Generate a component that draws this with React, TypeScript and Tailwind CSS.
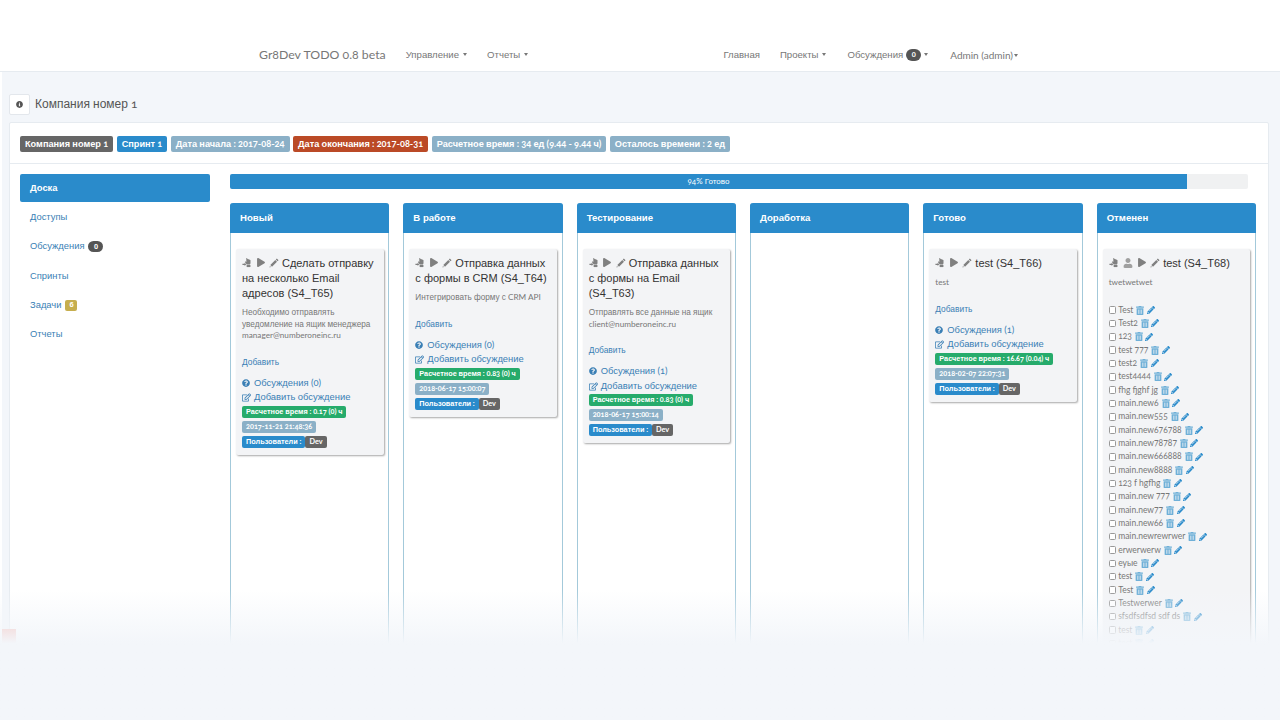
import { FaInfoCircle, FaPlay, FaQuestionCircle, FaRegEdit, FaTrashAlt, FaUser, FaPencilAlt } from 'react-icons/fa'

const labelColors = {
  dark: 'bg-[#666666]',
  blue: 'bg-[#2a8bcb]',
  light: 'bg-[#8bb0c7]',
  red: 'bg-[#bb4a26]',
  green: 'bg-[#26ab6b]',
}

// Cyrillic falls back to a Helvetica-like face in the original, digits and latin stay Lato
function t(text: string) {
  return (
    <span>
      {text.split(/([А-Яа-яЁё]+)/).map((part, i) =>
        i % 2 ? <span key={i} className="font-['Liberation_Sans']">{part}</span> : part
      )}
    </span>
  )
}

function HandIcon() {
  return (
    <svg viewBox="0 0 14 14" className="w-[10px] h-[11px] fill-[#808080] shrink-0">
      <path d="M6 1c.5-.7 1.4-.4 1.5.3l.1 1c.5-.6 1.4-.3 1.5.3.5-.4 1.3-.1 1.4.5.6-.3 1.4 0 1.4.7v3.9c0 .8-.3 1.4-.7 2H6.6L4.2 6.6c-.5-.7.3-1.5 1-1l.9.6L6 1z" />
      <path d="M6.5 10.4h5.3v3H6.5z" />
      <path d="M.6 8.8h3V7.2L6 9.6l-2.4 2.4v-1.6h-3z" />
    </svg>
  )
}

function ThinPencil() {
  return (
    <svg viewBox="0 0 14 14" className="w-[10px] h-[10px] fill-[#808080] shrink-0">
      <path d="M11 .6l2.4 2.4-1.5 1.5-2.4-2.4zM8.8 2.8l2.4 2.4-7 7-2.4-2.4zM1.3 11.3l1.4 1.4-2 .6z" />
    </svg>
  )
}

function NavItem({ text, caret = true }: { text: string; caret?: boolean }) {
  return (
    <span className="flex items-center gap-[4px]">
      {t(text)}
      {caret && <Caret />}
    </span>
  )
}

function Caret() {
  return <span className="inline-block border-x-[2.5px] border-t-[3px] border-x-transparent border-t-[#777777]" />
}

function Label({ color, children }: { color: keyof typeof labelColors; children: string }) {
  return (
    <span className={`inline-flex items-center h-[16px] px-[5px] rounded-[2px] text-white font-bold text-[9.2px] leading-[16px] whitespace-nowrap ${labelColors[color]}`}>
      {t(children)}
    </span>
  )
}

function SmallLabel({ color, children }: { color: keyof typeof labelColors; children: string }) {
  return (
    <span className={`inline-flex items-center h-[12px] px-[4px] rounded-[2px] text-white font-bold text-[7.3px] leading-[12px] whitespace-nowrap ${labelColors[color]}`}>
      {t(children)}
    </span>
  )
}

function CardIcons({ user = false }: { user?: boolean }) {
  return (
    <span className="inline-flex items-center gap-[4.5px] mr-[3px] align-[-1px]">
      <HandIcon />
      {user && <FaUser className="w-[10px] h-[10px] text-[#a0a0a0]" />}
      <FaPlay className="w-[8px] h-[9px] text-[#808080]" />
      <ThinPencil />
    </span>
  )
}

function TaskCard({ title, description, estimate, date, discussions }: {
  title: string
  description: string[]
  estimate: string
  date: string
  discussions: number
}) {
  return (
    <div className="bg-[#f3f4f6] rounded-[2px] shadow-[1px_1px_2px_rgba(0,0,0,0.35)] px-[6px] pt-[7px] pb-[7px]">
      <h3 className="font-['Liberation_Sans'] text-[#333333] text-[11px] leading-[15px]">
        <CardIcons />
        {title}
      </h3>
      <div className="mt-[6px] text-[#777777] text-[8.2px] leading-[11.5px]">
        {description.map(line => <p key={line}>{t(line)}</p>)}
      </div>
      <a className="block mt-[15px] text-[#3a7fb5] text-[8.4px] leading-[11px]">{t('Добавить')}</a>
      <div className="mt-[8px] text-[#3a7fb5] text-[9.4px] leading-[14.7px]">
        <p className="flex items-center gap-[4px]"><FaQuestionCircle className="w-[8px] h-[8px]" />{t(`Обсуждения (${discussions})`)}</p>
        <p className="flex items-center gap-[3px]"><FaRegEdit className="w-[9px] h-[9px]" />{t('Добавить обсуждение')}</p>
      </div>
      <div className="mt-[1px] flex flex-col items-start gap-[3px]">
        <SmallLabel color="green">{`Расчетное время : ${estimate} ч`}</SmallLabel>
        <SmallLabel color="light">{date}</SmallLabel>
        <span className="flex">
          <SmallLabel color="blue">Пользователи :</SmallLabel>
          <SmallLabel color="dark">Dev</SmallLabel>
        </span>
      </div>
    </div>
  )
}

const checklist = [
  'Test', 'Test2', '123', 'test 777', 'test2', 'test4444', 'fhg fjghf jg', 'main.new6', 'main.new555',
  'main.new676788', 'main.new78787', 'main.new666888', 'main.new8888', '123 f hgfhg', 'main.new 777',
  'main.new77', 'main.new66', 'main.newrewrwer', 'erwerwerw', 'eyыe', 'test', 'Test', 'Testwerwer',
  'sfsdfsdfsd sdf ds', 'test', 'test',
]

function ChecklistCard() {
  return (
    <div className="bg-[#f3f4f6] rounded-[2px] shadow-[1px_1px_2px_rgba(0,0,0,0.35)] px-[6px] pt-[7px] h-[500px]">
      <h3 className="font-['Liberation_Sans'] text-[#333333] text-[11px] leading-[15px]">
        <CardIcons user />
        test (S4_T68)
      </h3>
      <p className="mt-[6px] text-[#777777] text-[8.2px] leading-[11.5px]">twetwetwet</p>
      <ul className="mt-[15px] text-[#777777] text-[8.5px]">
        {checklist.map((item, i) => (
          <li key={i} className="flex items-center h-[13.33px] whitespace-nowrap">
            <span className="w-[7.5px] h-[7.5px] mr-[2px] rounded-[1.5px] border border-[#999999] bg-white shrink-0" />
            <span>{item}</span>
            <FaTrashAlt className="w-[8px] h-[9px] ml-[3px] text-[#6fb0d8]" />
            <FaPencilAlt className="w-[8px] h-[8px] ml-[2.5px] text-[#2a8bcb]" />
          </li>
        ))}
      </ul>
    </div>
  )
}

function Column({ title, children }: { title: string; children?: React.ReactNode }) {
  return (
    <div className="h-[470px] border-x border-[#a3c9da] rounded-t-[3px]">
      <div className="-mx-px h-[30px] flex items-center px-[10px] bg-[#2a8bcb] rounded-t-[3px] text-white font-bold text-[9.6px] font-['Liberation_Sans']">
        {title}
      </div>
      <div className="pt-[16px] pl-[5px] pr-[4.5px]">{children}</div>
    </div>
  )
}

function SideItem({ text, active = false, children }: { text: string; active?: boolean; children?: React.ReactNode }) {
  return (
    <div className={`flex items-center gap-[4px] px-[10px] rounded-[2px] text-[9.4px] font-['Liberation_Sans'] ${active ? 'h-[28px] mb-[0.5px] bg-[#2a8bcb] text-white font-bold' : 'h-[29.3px] text-[#3a7fb5]'}`}>
      {text}
      {children}
    </div>
  )
}

export default function App() {
  return (
    <div className="relative h-[720px] overflow-hidden bg-white [font-family:'Lato','Liberation_Sans',sans-serif] [font-variant-numeric:oldstyle-nums]">
      {/* Top nav */}
      <header className="h-[72px] pt-[38px] border-b border-[#e6ebf0] flex items-start text-[#777777] text-[9.6px]">
        <div className="h-[34px] ml-[259px] flex items-center gap-[20px]">
          <span className="text-[12.3px] leading-[16px]">Gr8Dev TODO 0.8 beta</span>
          <NavItem text="Управление" />
          <NavItem text="Отчеты" />
        </div>
        <div className="ml-auto mr-[262px] flex items-center gap-[20px] h-[34px]">
          <NavItem text="Главная" caret={false} />
          <NavItem text="Проекты" />
          <span className="ml-[1px] flex items-center gap-[3px]">
            {t('Обсуждения')}
            <span className="inline-flex items-center justify-center w-[15px] h-[12px] rounded-full bg-[#555555] text-white font-bold text-[7.5px]">0</span>
            <Caret />
          </span>
          <span className="ml-[2px] flex items-center gap-[1px] text-[10px]">Admin (admin)<Caret /></span>
        </div>
      </header>

      <main className="ml-[2px] bg-[#f3f6fa] h-[648px] pl-[7px] pr-[11px]">
        <div className="pt-[22px] h-[50px] flex items-start gap-[5px]">
          <span className="w-[21px] h-[21px] flex items-center justify-center bg-white border border-[#e3e7ec] rounded-[2px]">
            <FaInfoCircle className="w-[7px] h-[7px] text-[#555555]" />
          </span>
          <h1 className="text-[#555555] text-[12px] leading-[19px]">{t('Компания номер 1')}</h1>
        </div>

        {/* Panel */}
        <section className="bg-white border border-[#e6ebf0] rounded-[2px] h-[600px]">
          <div className="h-[41px] pl-[10px] pt-[13px] flex items-start gap-[3.5px] border-b border-[#e6ebf0]">
            <Label color="dark">Компания номер 1</Label>
            <Label color="blue">Спринт 1</Label>
            <Label color="light">Дата начала : 2017-08-24</Label>
            <Label color="red">Дата окончания : 2017-08-31</Label>
            <Label color="light">Расчетное время : 34 ед (9.44 - 9.44 ч)</Label>
            <Label color="light">Осталось времени : 2 ед</Label>
          </div>

          <div className="flex pl-[10px] pt-[10px]">
            <nav className="w-[190px] shrink-0">
              <SideItem text="Доска" active />
              <SideItem text="Доступы" />
              <SideItem text="Обсуждения">
                <span className="inline-flex items-center justify-center w-[15px] h-[11px] rounded-full bg-[#555555] text-white font-bold text-[7.5px]">0</span>
              </SideItem>
              <SideItem text="Спринты" />
              <SideItem text="Задачи">
                <span className="inline-flex items-center justify-center w-[12px] h-[11px] rounded-[2px] bg-[#c6ae4e] text-white font-bold text-[7.5px]">6</span>
              </SideItem>
              <SideItem text="Отчеты" />
            </nav>

            <div className="ml-[20px] w-[1026px]">
              <div className="w-[1018px] h-[15px] rounded-[2px] bg-[#f0f1f2] overflow-hidden">
                <div className="w-[94%] h-full bg-[#2a8bcb] text-white text-[8px] leading-[15px] text-center">{t('94% Готово')}</div>
              </div>

              <div className="mt-[14px] grid grid-cols-6 gap-[14px]">
                <Column title="Новый">
                  <TaskCard
                    title="Сделать отправку на несколько Email адресов (S4_T65)"
                    description={['Необходимо отправлять', 'уведомление на ящик менеджера', 'manager@numberoneinc.ru']}
                    estimate="0.17 (0)"
                    date="2017-11-21 21:48:36"
                    discussions={0}
                  />
                </Column>
                <Column title="В работе">
                  <TaskCard
                    title="Отправка данных с формы в CRM (S4_T64)"
                    description={['Интегрировать форму с CRM API']}
                    estimate="0.83 (0)"
                    date="2018-06-17 15:00:07"
                    discussions={0}
                  />
                </Column>
                <Column title="Тестирование">
                  <TaskCard
                    title="Отправка данных с формы на Email (S4_T63)"
                    description={['Отправлять все данные на ящик', 'client@numberoneinc.ru']}
                    estimate="0.83 (0)"
                    date="2018-06-17 15:00:14"
                    discussions={1}
                  />
                </Column>
                <Column title="Доработка" />
                <Column title="Готово">
                  <TaskCard
                    title="test (S4_T66)"
                    description={['test']}
                    estimate="16.67 (0.04)"
                    date="2018-02-07 22:07:31"
                    discussions={1}
                  />
                </Column>
                <Column title="Отменен">
                  <ChecklistCard />
                </Column>
              </div>
            </div>
          </div>
        </section>
      </main>

      {/* Leftover corner image, almost faded out */}
      <div className="absolute left-[2px] top-[629px] w-[14px] h-[14px] bg-[#f4a8a0]" />

      {/* Fade over the bottom of the page */}
      <div className="absolute inset-x-0 bottom-0 h-[130px] bg-linear-to-b from-[#f3f6fa00] to-[#f3f6fa] to-[41%]" />
    </div>
  )
}
